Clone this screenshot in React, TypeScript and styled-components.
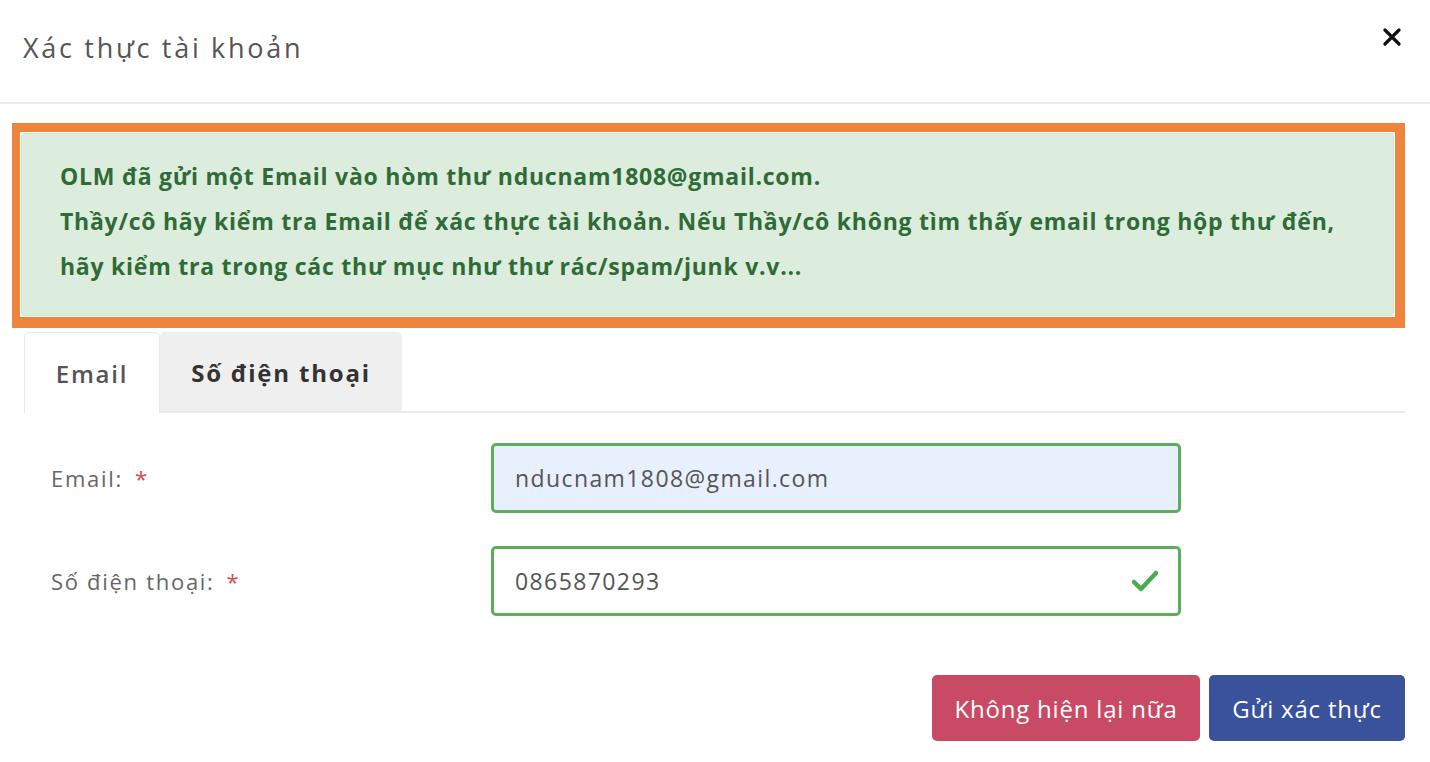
import styled, { createGlobalStyle } from 'styled-components'

const GlobalStyle = createGlobalStyle`
	html, body {
		margin: 0;
		padding: 0;
		background: #fff;
	}
	body {
		font-family: "Open Sans", "Noto Sans", sans-serif;
		color: #555;
	}
`

const Modal = styled.div`
	width: 1430px;
	height: 762px;
	background: #fff;
	overflow: hidden;
`

const Header = styled.div`
	height: 104px;
	display: flex;
	align-items: center;
	justify-content: space-between;
	padding: 0 27px 8px 23px;
	box-sizing: border-box;
	border-bottom: 2px solid #e9ebee;
`

const Title = styled.h4`
	margin: 0;
	font-size: 27px;
	font-weight: 400;
	color: #555;
	letter-spacing: 2.7px;
`

const Close = styled.button`
	border: 0;
	background: none;
	padding: 0;
	margin-top: -20px;
	width: 22px;
	height: 22px;
	display: flex;
	align-items: center;
	justify-content: center;
	cursor: pointer;
`

const Body = styled.div`
	padding: 19px 25px 0 12px;
`

const Highlight = styled.div`
	border: solid #ef843c;
	border-width: 9px 10px 11px 8px;
	padding: 1px;
	background: #fff;
`

const Alert = styled.div`
	background: #dcedde;
	border: 1px solid #cfe6d0;
	border-radius: 4px;
	padding: 20px 20px 26px 38px;
	color: #2f6b36;
	font-size: 23px;
	font-weight: 700;
	line-height: 45px;
	letter-spacing: 0.75px;
`

const Tabs = styled.div`
	display: flex;
	margin: 4px 0 0 12px;
	border-bottom: 2px solid #e9ebee;
`

const Tab = styled.div<{ $active?: boolean }>`
	display: flex;
	align-items: center;
	justify-content: center;
	box-sizing: border-box;
	width: ${(p) => (p.$active ? '136px' : '242px')};
	height: ${(p) => (p.$active ? '81px' : '79px')};
	font-size: 24px;
	font-weight: ${(p) => (p.$active ? 600 : 700)};
	letter-spacing: 1.8px;
	color: ${(p) => (p.$active ? '#555' : '#333')};
	background: ${(p) => (p.$active ? '#fff' : '#efefef')};
	border: 1px solid ${(p) => (p.$active ? '#e6e8eb' : '#efefef')};
	border-bottom: 0;
	border-radius: 5px 5px 0 0;
	margin-bottom: ${(p) => (p.$active ? '-2px' : '0')};
`

const Form = styled.div`
	padding: 30px 0 0 39px;
	display: flex;
	flex-direction: column;
	gap: 33px;
`

const Row = styled.div`
	display: grid;
	grid-template-columns: 440px 690px;
	align-items: center;
`

const Label = styled.label`
	font-size: 22px;
	color: #666;
	letter-spacing: 1.7px;
`

const Star = styled.span`
	color: #d24a5a;
	margin-left: 12px;
`

const Field = styled.div<{ $filled?: boolean }>`
	height: 70px;
	box-sizing: border-box;
	border: 3px solid #5cad5c;
	border-radius: 5px;
	background: ${(p) => (p.$filled ? '#e8f0fe' : '#fff')};
	display: flex;
	align-items: center;
	justify-content: space-between;
	padding: 0 18px 0 21px;
	font-size: 23px;
	color: #555;
	letter-spacing: 1.4px;
`

const Actions = styled.div`
	display: flex;
	justify-content: flex-end;
	gap: 9px;
	margin-top: 59px;
`

const Button = styled.button<{ $variant: 'danger' | 'primary' }>`
	height: 66px;
	width: ${(p) => (p.$variant === 'danger' ? '268px' : '196px')};
	border: 0;
	border-radius: 5px;
	padding: 0;
	background: ${(p) => (p.$variant === 'danger' ? '#c94a64' : '#39529b')};
	color: #fff;
	font-family: inherit;
	font-size: 24px;
	letter-spacing: 0.8px;
	cursor: pointer;
`

export default function App() {
	return (
		<>
			<GlobalStyle />
			<Modal>
				<Header>
					<Title>Xác thực tài khoản</Title>
					<Close aria-label='close'>
						<svg width='18' height='18' viewBox='0 0 18 18'>
							<path d='M2 2 L16 16 M16 2 L2 16' stroke='#111' strokeWidth='3.2' strokeLinecap='round' />
						</svg>
					</Close>
				</Header>
				<Body>
					<Highlight>
						<Alert>
							OLM đã gửi một Email vào hòm thư nducnam1808@gmail.com.
							<br />
							Thầy/cô hãy kiểm tra Email để xác thực tài khoản. Nếu Thầy/cô không tìm thấy email trong hộp thư đến,
							<br />
							hãy kiểm tra trong các thư mục như thư rác/spam/junk v.v...
						</Alert>
					</Highlight>
					<Tabs>
						<Tab $active>Email</Tab>
						<Tab>Số điện thoại</Tab>
					</Tabs>
					<Form>
						<Row>
							<Label>
								Email:<Star>*</Star>
							</Label>
							<Field $filled>nducnam1808@gmail.com</Field>
						</Row>
						<Row>
							<Label>
								Số điện thoại:<Star>*</Star>
							</Label>
							<Field>
								0865870293
								<svg width='30' height='26' viewBox='0 0 30 26'>
									<path d='M4 14 L11 21 L26 5' fill='none' stroke='#4caa50' strokeWidth='4.5' strokeLinecap='round' strokeLinejoin='round' />
								</svg>
							</Field>
						</Row>
					</Form>
					<Actions>
						<Button $variant='danger'>Không hiện lại nữa</Button>
						<Button $variant='primary'>Gửi xác thực</Button>
					</Actions>
				</Body>
			</Modal>
		</>
	)
}
